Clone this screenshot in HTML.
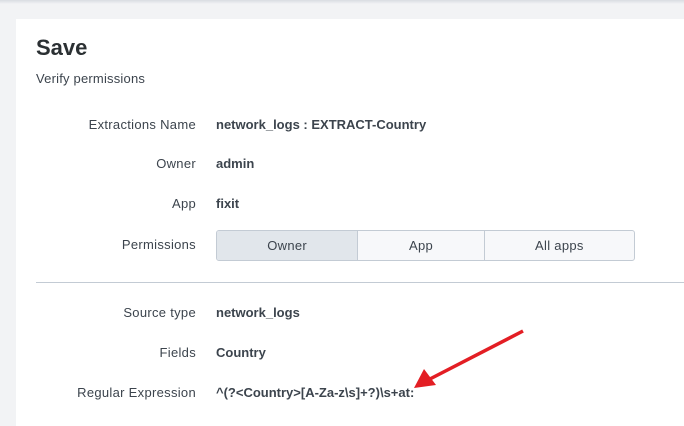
<!DOCTYPE html>
<html><head><style>
html,body{margin:0;width:684px;height:426px;overflow:hidden}
body{background:#f2f3f5;font-family:"Liberation Sans",sans-serif;position:relative;color:#3c444d}
.top{position:absolute;left:0;top:0;width:684px;height:4px;background:linear-gradient(#d9dce1,#f2f3f5)}
.panel{position:absolute;left:16px;top:19px;width:668px;height:407px;background:#fff}
.t{position:absolute;white-space:nowrap}
.lab{position:absolute;right:488px;font-size:13px;letter-spacing:0.3px;color:#3c444d;white-space:nowrap}
.val{position:absolute;left:216px;font-size:13px;font-weight:bold;color:#3c444d;white-space:nowrap}
.btns{position:absolute;left:216px;top:230px;width:417px;height:29px;border:1px solid #c3cbd4;border-radius:3px;display:flex;background:#f7f8fa;overflow:hidden}
.btns div{font-size:13px;letter-spacing:0.3px;text-align:center;line-height:29px;color:#3c444d;border-right:1px solid #c3cbd4}
</style></head><body>
<div class="top"></div>
<div class="panel"></div>
<div class="t" style="left:36px;top:35px;font-size:22px;font-weight:bold;color:#2b3033">Save</div>
<div class="t" style="left:36px;top:71px;font-size:13px;letter-spacing:0.2px">Verify permissions</div>
<div class="lab" style="top:117px">Extractions Name</div><div class="val" style="top:117px">network_logs : EXTRACT-Country</div>
<div class="lab" style="top:156px">Owner</div><div class="val" style="top:156px">admin</div>
<div class="lab" style="top:196px">App</div><div class="val" style="top:196px">fixit</div>
<div class="lab" style="top:237px">Permissions</div>
<div class="btns"><div style="width:141px;background:#e1e6eb">Owner</div><div style="width:126px">App</div><div style="width:150px;border-right:none">All apps</div></div>
<div style="position:absolute;left:36px;top:282px;width:648px;height:1px;background:#c3cbd4"></div>
<div class="lab" style="top:305px">Source type</div><div class="val" style="top:305px">network_logs</div>
<div class="lab" style="top:345px">Fields</div><div class="val" style="top:345px">Country</div>
<div class="lab" style="top:385px">Regular Expression</div><div class="val" style="top:385px">^(?&lt;Country&gt;[A-Za-z\s]+?)\s+at:</div>
<svg style="position:absolute;left:0;top:0" width="684" height="426"><line x1="523" y1="331" x2="428" y2="380" stroke="#e31e24" stroke-width="3.5"/><polygon points="414,388 424,369 436,385" fill="#e31e24"/></svg>
</body></html>
